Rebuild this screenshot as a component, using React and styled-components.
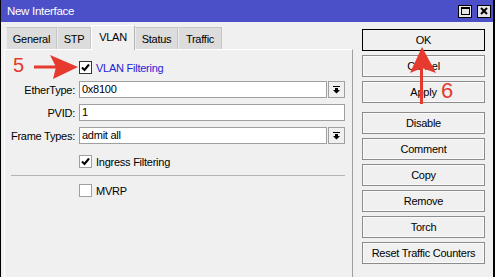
import styled, { createGlobalStyle } from 'styled-components';

const GlobalStyle = createGlobalStyle`
  html, body { margin: 0; padding: 0; background: #fff; }
  body {
    font-family: "Liberation Sans", Arial, sans-serif;
    font-size: 11px;
    letter-spacing: -0.25px;
    color: #000;
  }
  * { box-sizing: border-box; }
`;

const RED = '#e53a2d';

const Window = styled.div`
  position: relative;
  width: 495px;
  height: 277px;
  overflow: hidden;
  background: #f0f0f0;
  border-left: 1px solid #000;
  border-right: 2px solid #000;
  display: flex;
  flex-direction: column;
`;

const TitleBar = styled.div`
  flex: none;
  height: 22px;
  background: #4b4fc8;
  color: #fff;
  display: flex;
  align-items: center;
  padding: 0 2px 0 6px;
  font-size: 11.5px;
  letter-spacing: -0.3px;
`;

const Title = styled.span`
  flex: 1;
`;

const TitleButtons = styled.div`
  display: flex;
  gap: 5px;
`;

const TitleButton = styled.div`
  width: 14px;
  height: 13px;
  background: #e6e6e6;
  border: 1px solid #000;
  display: flex;
  align-items: center;
  justify-content: center;
`;

const Body = styled.div`
  flex: 1;
  display: flex;
`;

const LeftArea = styled.div`
  width: 352px;
  padding-left: 3px;
  display: flex;
  flex-direction: column;
`;

const TabBar = styled.div`
  flex: none;
  height: 27px;
  padding-left: 2px;
  display: flex;
  align-items: flex-end;
`;

const Tab = styled.div`
  width: ${p => p.$w}px;
  height: 22px;
  display: flex;
  align-items: center;
  justify-content: center;
  background: #dcdcdc;
  border: 1px solid #c6c6c6;
  border-bottom: none;
  border-left-color: #ececec;

  ${p => p.$active && `
    position: relative;
    z-index: 1;
    height: 25px;
    margin-bottom: -1px;
    padding-bottom: 3px;
    background: #f0f0f0;
    border-color: #fff #b5b5b5 #f0f0f0 #fff;
  `}
`;

const Panel = styled.div`
  flex: 1;
  border-top: 1px solid #fff;
  border-left: 1px solid #fff;
  border-right: 1px solid #a0a0a0;
  padding: 9px 7px 0 0;
`;

const Row = styled.div`
  display: flex;
  align-items: center;
  height: 17px;
  margin-top: ${p => p.$mt || 0}px;
  padding-left: ${p => (p.$indent ? 74 : 0)}px;
`;

const Label = styled.div`
  width: 70px;
  margin-right: 4px;
  text-align: right;
`;

const Field = styled.div`
  flex: 1;
  display: flex;
  gap: 1px;
  height: 17px;
`;

const Input = styled.div`
  flex: 1;
  height: 17px;
  background: #fff;
  border: 1px solid #a0a0a0;
  padding-left: 2px;
  line-height: 15px;
`;

const DropButton = styled.div`
  width: 17px;
  height: 17px;
  background: #f0f0f0;
  border: 1px solid #a0a0a0;
  display: flex;
  align-items: center;
  justify-content: center;
`;

const CheckBox = styled.div`
  width: 13px;
  height: 13px;
  background: #fff;
  border: 1px solid ${p => (p.$focus ? '#333' : '#a0a0a0')};
  display: flex;
  align-items: center;
  justify-content: center;
  margin-right: 4px;
`;

const CheckText = styled.span`
  color: ${p => (p.$focus ? '#2424d6' : '#000')};
`;

const Separator = styled.div`
  height: 1px;
  margin: 5px 0 0 6px;
  background: #b4b4b4;
`;

const RightColumn = styled.div`
  width: 123px;
  margin-left: 9px;
  padding-top: 7px;
  display: flex;
  flex-direction: column;
`;

const Button = styled.div`
  height: 22px;
  margin-bottom: ${p => p.$gap || 4}px;
  display: flex;
  align-items: center;
  justify-content: center;
  background: #f0f0f0;
  border: 1px solid ${p => (p.$default ? '#000' : '#8c8c8c')};
  box-shadow: inset 0 0 0 1px ${p => (p.$default ? '#f0f0f0' : '#fafafa')};
`;

const Overlay = styled.svg`
  position: absolute;
  left: -1px;
  top: 0;
  pointer-events: none;
`;

const Note = styled.span`
  position: absolute;
  left: ${p => p.$x}px;
  top: ${p => p.$y}px;
  font-size: ${p => p.$size}px;
  line-height: ${p => p.$size}px;
  letter-spacing: 0;
  color: ${RED};
`;

const DropIcon = () => (
  <svg width="7" height="8" viewBox="0 0 7 8">
    <rect x="0" y="0" width="7" height="1" fill="#000" />
    <polygon points="2,2 5,2 5,4 7,4 3.5,7.5 0,4 2,4" fill="#000" />
  </svg>
);

const Check = () => (
  <svg width="9" height="9" viewBox="0 0 9 9">
    <polyline points="1,4.5 3.5,7 8,1.5" fill="none" stroke="#000" strokeWidth="2" />
  </svg>
);

const buttons = [
  { label: 'OK', default: true },
  { label: 'Cancel' },
  { label: 'Apply', gap: 9 },
  { label: 'Disable' },
  { label: 'Comment' },
  { label: 'Copy' },
  { label: 'Remove' },
  { label: 'Torch' },
  { label: 'Reset Traffic Counters' },
];

const tabs = [
  { label: 'General', w: 51 },
  { label: 'STP', w: 34 },
  { label: 'VLAN', w: 44, active: true },
  { label: 'Status', w: 43 },
  { label: 'Traffic', w: 44 },
];

export default function App() {
  return (
    <>
      <GlobalStyle />
      <Window>
        <TitleBar>
          <Title>New Interface</Title>
          <TitleButtons>
            <TitleButton>
              <svg width="9" height="8" viewBox="0 0 9 8">
                <rect x="0.5" y="0.5" width="8" height="7" fill="none" stroke="#000" />
                <rect x="0" y="0" width="9" height="2" fill="#000" />
              </svg>
            </TitleButton>
            <TitleButton>
              <svg width="8" height="8" viewBox="0 0 8 8">
                <path d="M1 1 L7 7 M7 1 L1 7" stroke="#000" strokeWidth="2" />
              </svg>
            </TitleButton>
          </TitleButtons>
        </TitleBar>

        <Body>
          <LeftArea>
            <TabBar>
              {tabs.map(t => (
                <Tab key={t.label} $w={t.w} $active={t.active}>{t.label}</Tab>
              ))}
            </TabBar>
            <Panel>
              <Row $indent>
                <CheckBox $focus><Check /></CheckBox>
                <CheckText $focus>VLAN Filtering</CheckText>
              </Row>
              <Row $mt={5}>
                <Label>EtherType:</Label>
                <Field>
                  <Input>0x8100</Input>
                  <DropButton><DropIcon /></DropButton>
                </Field>
              </Row>
              <Row $mt={6}>
                <Label>PVID:</Label>
                <Field>
                  <Input>1</Input>
                </Field>
              </Row>
              <Row $mt={6}>
                <Label>Frame Types:</Label>
                <Field>
                  <Input>admit all</Input>
                  <DropButton><DropIcon /></DropButton>
                </Field>
              </Row>
              <Row $mt={9} $indent>
                <CheckBox><Check /></CheckBox>
                <CheckText>Ingress Filtering</CheckText>
              </Row>
              <Separator />
              <Row $mt={6} $indent>
                <CheckBox />
                <CheckText>MVRP</CheckText>
              </Row>
            </Panel>
          </LeftArea>

          <RightColumn>
            {buttons.map(b => (
              <Button key={b.label} $default={b.default} $gap={b.gap}>{b.label}</Button>
            ))}
          </RightColumn>
        </Body>

        <Overlay width="495" height="277" viewBox="0 0 495 277">
          <line x1="34" y1="67" x2="58" y2="67" stroke={RED} strokeWidth="3" />
          <polygon points="78,67 50,55 56,67 53,79" fill={RED} />
          <line x1="421.5" y1="104" x2="421.5" y2="66" stroke={RED} strokeWidth="3" />
          <polygon points="422,47 436,73 422,68 410,73" fill={RED} />
        </Overlay>
        <Note $x={12} $y={55} $size={20}>5</Note>
        <Note $x={440} $y={80} $size={22}>6</Note>
      </Window>
    </>
  );
}
